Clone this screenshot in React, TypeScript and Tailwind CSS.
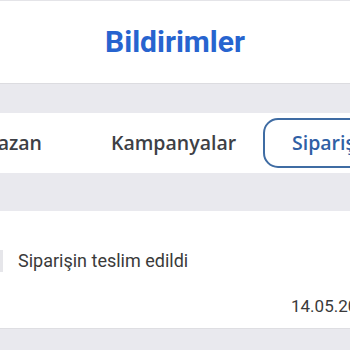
import React from "react";

export default function App() {
  return (
    <div className="w-[350px] h-[350px] overflow-hidden bg-[#e9e9ee] flex flex-col" style={{ fontFamily: "Roboto, 'Liberation Sans', sans-serif" }}>
      <div className="h-px bg-[#e4e4e8] shrink-0" />
      <div className="h-[83px] bg-white flex items-center justify-center shrink-0 border-b border-[#dcdce0]">
        <span className="text-[30px] font-bold text-[#2764cf] leading-none">Bildirimler</span>
      </div>
      <div className="h-[29px] shrink-0" />
      <div className="h-[60px] bg-white flex items-center shrink-0 whitespace-nowrap text-[#3d4045]" style={{ fontFamily: "'Open Sans', Lato, sans-serif" }}>
        <div className="w-[42px] flex justify-end shrink-0">
          <span className="shrink-0 text-[19.5px] font-semibold">Kazan</span>
        </div>
        <span className="ml-[69px] shrink-0 w-[124px] text-[19.5px] font-semibold">Kampanyalar</span>
        <div className="ml-[28px] shrink-0 h-[50px] rounded-[15px] border-2 border-[#3f6ca3] flex items-center px-[27px]">
          <span className="text-[19.5px] font-semibold text-[#2f60a5]">Siparişlerim</span>
        </div>
      </div>
      <div className="h-[38px] shrink-0" />
      <div className="h-[118px] bg-white shrink-0 relative flex flex-col border-b border-[#dedee2]">
        <div className="flex items-center mt-[39px]">
          <div className="w-[3px] h-[22px] bg-[#e6e6ea]" />
          <span className="ml-[15px] text-[18px] text-[#3a3a3a] leading-none">Siparişin teslim edildi</span>
        </div>
        <div className="mt-[23px] pl-[291px] whitespace-nowrap">
          <span className="text-[17px] text-[#3a3a3a] leading-none">14.05.2024</span>
        </div>
      </div>
    </div>
  );
}
